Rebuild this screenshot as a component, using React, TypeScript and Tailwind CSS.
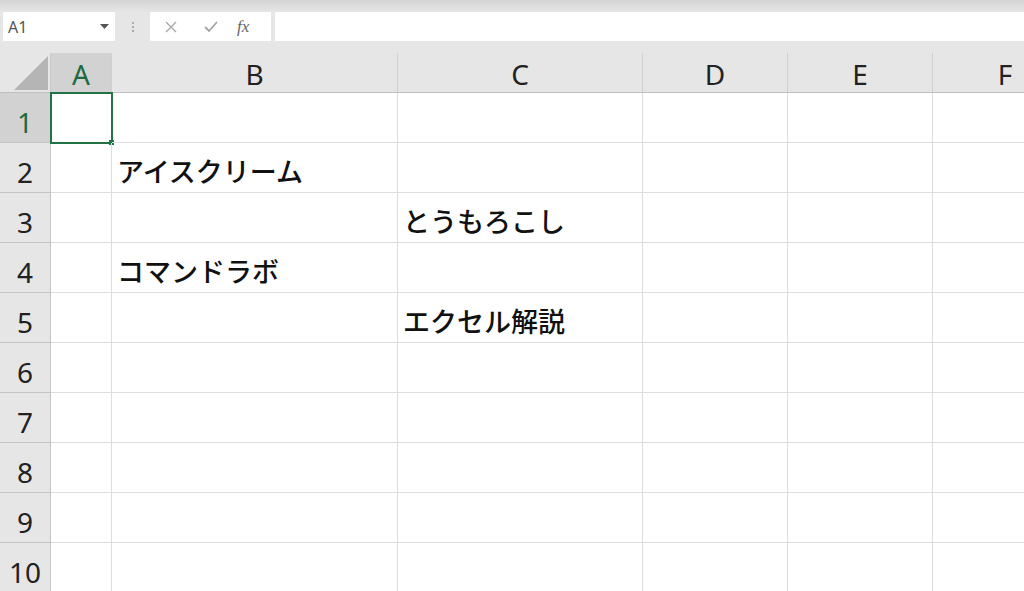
import React from "react";

const cols = [
  { key: "A", w: "w-[61px]" },
  { key: "B", w: "w-[286px]" },
  { key: "C", w: "w-[245px]" },
  { key: "D", w: "w-[145px]" },
  { key: "E", w: "w-[145px]" },
  { key: "F", w: "w-[145px]" },
];

const cells: Record<string, string> = {
  B2: "アイスクリーム",
  C3: "とうもろこし",
  B4: "コマンドラボ",
  C5: "エクセル解説",
};

const rows = [1, 2, 3, 4, 5, 6, 7, 8, 9, 10];

const latin = { fontFamily: '"Noto Sans", "Open Sans", sans-serif' };
const jp = { fontFamily: '"Noto Sans CJK JP", "Noto Sans", sans-serif' };

function FormulaBar() {
  return (
    <div className="flex h-[53px] flex-col bg-[#e6e6e6]">
      <div className="h-[12px] bg-gradient-to-b from-[#d4d4d4] to-[#e6e6e6]" />
      <div className="flex h-[29px] items-stretch gap-0 pl-[3px]">
        <div className="flex w-[112px] items-center justify-between bg-white pl-[5px] pr-[6px] text-[16px] text-[#555]" style={latin}>
          <span>A1</span>
          <svg width="9" height="5" viewBox="0 0 9 5">
            <path d="M0 0 L9 0 L4.5 5 Z" fill="#555" />
          </svg>
        </div>
        <div className="flex w-[35px] flex-col items-center justify-center gap-[2px]">
          <span className="h-[2px] w-[2px] rounded-full bg-[#9a9a9a]" />
          <span className="h-[2px] w-[2px] rounded-full bg-[#9a9a9a]" />
          <span className="h-[2px] w-[2px] rounded-full bg-[#9a9a9a]" />
        </div>
        <div className="flex w-[121px] items-center bg-white">
          <svg className="ml-[15px]" width="12" height="12" viewBox="0 0 12 12">
            <path d="M1 1 L11 11 M11 1 L1 11" stroke="#a6a6a6" strokeWidth="1.3" fill="none" />
          </svg>
          <svg className="ml-[27px]" width="14" height="11" viewBox="0 0 14 11">
            <path d="M1 6 L5 10 L13 1" stroke="#a6a6a6" strokeWidth="1.8" fill="none" />
          </svg>
          <span className="ml-[19px] text-[17px] italic text-[#666]" style={{ fontFamily: '"Liberation Serif", serif' }}>
            fx
          </span>
        </div>
        <div className="ml-[4px] flex-1 bg-white" />
      </div>
    </div>
  );
}

function HeaderRow() {
  return (
    <div className="flex h-[40px] border-b border-[#bfbfbf] bg-[#e6e6e6]" style={latin}>
      <div className="relative w-[51px] shrink-0 border-r border-[#c8c8c8]">
        <svg className="absolute bottom-[2px] right-[2px]" width="34" height="34" viewBox="0 0 34 34">
          <path d="M34 0 L34 34 L0 34 Z" fill="#b5b5b5" />
        </svg>
      </div>
      {cols.map((c) => (
        <div
          key={c.key}
          className={`${c.w} flex shrink-0 items-center justify-center border-r border-[#d0d0d0] pt-[2px] text-[28px] leading-none ${
            c.key === "A" ? "bg-[#d2d2d2] text-[#1d6b40]" : "text-[#222]"
          }`}
        >
          {c.key}
        </div>
      ))}
    </div>
  );
}

function Row({ r }: { r: number }) {
  return (
    <div className="flex h-[50px]">
      <div
        className={`flex w-[51px] shrink-0 items-center justify-center border-r border-b border-[#c4c4c4] pt-[9px] text-[28px] leading-none ${
          r === 1 ? "bg-[#d2d2d2] text-[#1d6b40]" : "bg-[#e6e6e6] text-[#222]"
        }`}
        style={latin}
      >
        {r}
      </div>
      {cols.map((c) => {
        const v = cells[`${c.key}${r}`];
        const selected = c.key === "A" && r === 1;
        return (
          <div key={c.key} className={`${c.w} relative flex shrink-0 items-end border-r border-b border-[#dedede] pb-[8px] pl-[5px]`}>
            {v && (
              <span className="whitespace-nowrap text-[27px] font-medium leading-none text-[#111]" style={jp}>
                {v}
              </span>
            )}
            {selected && (
              <>
                <div className="absolute -left-px -top-px h-[52px] w-[63px] border-2 border-[#217346]" />
                <div className="absolute -bottom-[3px] -right-[3px] h-[5px] w-[5px] bg-[#217346]" />
              </>
            )}
          </div>
        );
      })}
    </div>
  );
}

export default function App() {
  return (
    <div className="h-[591px] w-[1024px] overflow-hidden bg-white">
      <FormulaBar />
      <HeaderRow />
      {rows.map((r) => (
        <Row key={r} r={r} />
      ))}
    </div>
  );
}
